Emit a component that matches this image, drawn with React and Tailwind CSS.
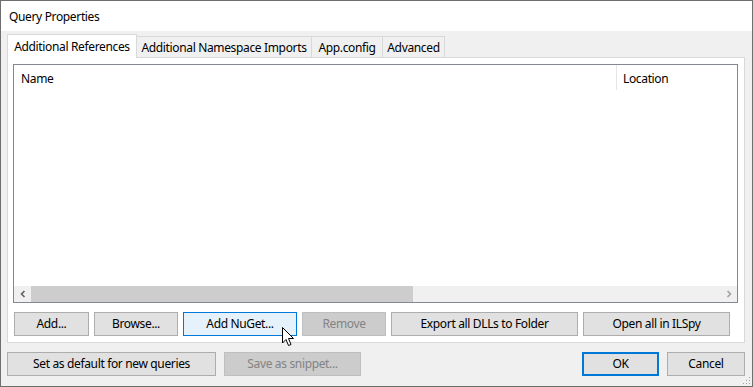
import React from "react";

const font = { fontFamily: '"Segoe UI", "Noto Sans", sans-serif' };

function Btn({ w, children, kind }) {
  let cls = "bg-[#e1e1e1] border border-[#adadad] text-black";
  if (kind === "hover") cls = "bg-[#e5f1fb] border border-[#0078d7] text-black";
  if (kind === "disabled") cls = "bg-[#cccccc] border border-[#bfbfbf] text-[#838383]";
  if (kind === "default") cls = "bg-[#e1e1e1] border-2 border-[#0078d7] text-black";
  return (
    <div className={`${w} h-[24px] shrink-0 flex items-center justify-center whitespace-nowrap ${cls}`}>
      {children}
    </div>
  );
}

function Tab({ w, active, children }) {
  if (active) {
    return (
      <div className={`${w} h-[24px] -mb-px z-10 bg-white border border-b-0 border-[#d9d9d9] flex items-center justify-center pt-px whitespace-nowrap`}>
        {children}
      </div>
    );
  }
  return (
    <div className={`${w} h-[21px] -ml-px bg-[#f0f0f0] border border-b-0 border-[#d9d9d9] flex items-center justify-center pt-px whitespace-nowrap`}>
      {children}
    </div>
  );
}

export default function App() {
  return (
    <div style={font} className="relative w-[753px] h-[387px] border border-[#6e6e6e] bg-[#f0f0f0] flex flex-col text-black text-[12px] tracking-[-0.35px] select-none">
      {/* title bar */}
      <div className="h-[30px] bg-white flex items-center pl-[8px] pt-px">Query Properties</div>

      <div className="flex-1 flex flex-col pl-[6px] pr-[7px] pt-[3px]">
        {/* tabs */}
        <div className="flex items-end">
          <Tab w="w-[130px]" active>Additional References</Tab>
          <Tab w="w-[176px]">Additional Namespace Imports</Tab>
          <Tab w="w-[72px]">App.config</Tab>
          <Tab w="w-[63px]">Advanced</Tab>
        </div>

        {/* tab panel */}
        <div className="h-[286px] bg-white border border-[#d9d9d9] flex flex-col pt-[6px] pl-[5px] pr-[6px]">
          <div className="h-[239px] border border-[#828790] flex flex-col">
            <div className="h-[26px] flex">
              <div className="w-[602px] flex items-center pl-[7px] pt-[2px]">Name</div>
              <div className="w-px h-[25px] bg-[#e5e5e5]"></div>
              <div className="flex-1 flex items-center pl-[6px] pt-[2px]">Location</div>
            </div>
            <div className="flex-1"></div>
            {/* horizontal scrollbar */}
            <div className="h-[16px] bg-[#f0f0f0] flex items-center">
              <div className="w-[17px] h-full flex items-center justify-center">
                <svg width="8" height="8" viewBox="0 0 8 8">
                  <path d="M5.5 1 L2.5 4 L5.5 7" fill="none" stroke="#606060" strokeWidth="1.6" />
                </svg>
              </div>
              <div className="w-[382px] h-full bg-[#cdcdcd]"></div>
              <div className="flex-1"></div>
              <div className="w-[17px] h-full flex items-center justify-center">
                <svg width="8" height="8" viewBox="0 0 8 8">
                  <path d="M2.5 1 L5.5 4 L2.5 7" fill="none" stroke="#a0a0a0" strokeWidth="1.6" />
                </svg>
              </div>
            </div>
          </div>

          <div className="mt-[9px] ml-px flex gap-[5px]">
            <Btn w="w-[75px]">Add...</Btn>
            <Btn w="w-[84px]">Browse...</Btn>
            <Btn w="w-[114px]" kind="hover">Add NuGet...</Btn>
            <Btn w="w-[84px]" kind="disabled">Remove</Btn>
            <Btn w="w-[187px]">Export all DLLs to Folder</Btn>
            <Btn w="w-[147px]">Open all in ILSpy</Btn>
          </div>
        </div>

        {/* bottom buttons */}
        <div className="mt-[9px] flex">
          <Btn w="w-[209px]">Set as default for new queries</Btn>
          <div className="w-[8px]"></div>
          <Btn w="w-[137px]" kind="disabled">Save as snippet...</Btn>
          <div className="flex-1"></div>
          <Btn w="w-[77px]" kind="default">OK</Btn>
          <div className="w-[8px]"></div>
          <Btn w="w-[78px]">Cancel</Btn>
        </div>
      </div>

      {/* mouse cursor */}
      <svg className="absolute left-[281px] top-[326px]" width="13" height="20" viewBox="0 0 13 20">
        <path d="M0.5 0.5 L0.5 16 L4 12.5 L6.5 18.5 L9 17.5 L6.5 11.5 L11.5 11.5 Z" fill="white" stroke="black" strokeWidth="1" strokeLinejoin="round" />
      </svg>

      {/* size grip */}
      <svg className="absolute right-[1px] bottom-[1px]" width="9" height="9" viewBox="0 0 9 9">
        <rect x="7" y="1" width="1" height="1" fill="#a0a0a0" />
        <rect x="4" y="4" width="1" height="1" fill="#a0a0a0" />
        <rect x="7" y="4" width="1" height="1" fill="#a0a0a0" />
        <rect x="1" y="7" width="1" height="1" fill="#a0a0a0" />
        <rect x="4" y="7" width="1" height="1" fill="#a0a0a0" />
        <rect x="7" y="7" width="1" height="1" fill="#a0a0a0" />
      </svg>
    </div>
  );
}
